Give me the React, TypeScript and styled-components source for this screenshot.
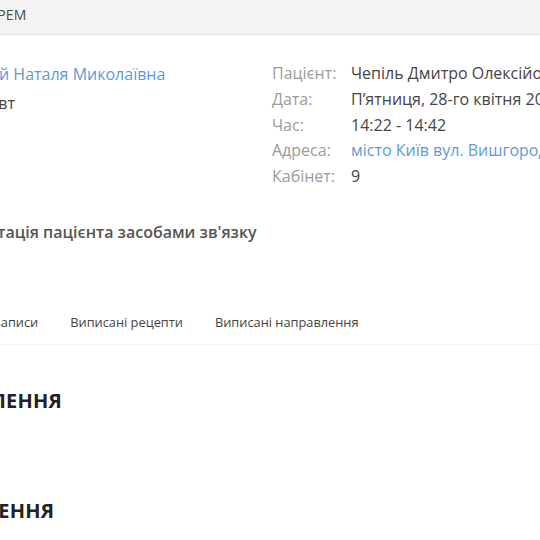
import React from "react";
import styled, { createGlobalStyle } from "styled-components";
import { Video } from "lucide-react";

const Global = createGlobalStyle`
  html, body { margin: 0; padding: 0; background: #fff; overflow: hidden; }
  body { font-family: "Open Sans", "Noto Sans", sans-serif; color: #444; }
`;

const Viewport = styled.div`
  width: 540px;
  height: 540px;
  overflow: hidden;
`;

const Header = styled.div`
  height: 35px;
  box-sizing: border-box;
  background: #f3f3f4;
  border-bottom: 1px solid #e3e3e5;
  display: flex;
  align-items: center;
  padding-bottom: 6px;
`;

const Page = styled.div`
  margin-left: -94px;
  width: 1100px;
`;

const HeaderTitle = styled.div`
  padding-left: 9px;
  font-size: 14px;
  color: #4a4a4a;
  letter-spacing: 0.2px;
  white-space: nowrap;
`;

const Info = styled.div`
  display: grid;
  grid-template-columns: 366px 1fr;
  padding-top: 26px;
`;

const LeftCol = styled.div`
  display: flex;
  flex-direction: column;
`;

const Doctor = styled.div`
  font-size: 16px;
  line-height: 26px;
  color: #5e9ad6;
  white-space: nowrap;
`;

const Specialty = styled.div`
  font-size: 16px;
  line-height: 26px;
  color: #444;
  margin-top: 3px;
  white-space: nowrap;
`;

const Details = styled.div`
  display: grid;
  grid-template-columns: 79px 1fr;
  font-size: 16px;
  line-height: 25.8px;
  white-space: nowrap;
`;

const Label = styled.div`
  color: #9b9b9b;
`;

const Value = styled.div<{ $link?: boolean }>`
  color: ${(p) => (p.$link ? "#5e9ad6" : "#454545")};
`;

const ServiceRow = styled.div`
  margin-top: 31px;
  display: flex;
  align-items: center;
  gap: 9px;
  color: #555;
`;

const ServiceType = styled.div`
  font-size: 16px;
  font-weight: 600;
  white-space: nowrap;
`;

const Tabs = styled.div`
  margin-top: 70px;
  padding-left: 16px;
  display: flex;
  border-bottom: 1px solid #f0f0f0;
  padding-bottom: 13px;
`;

const Tab = styled.div`
  font-size: 12.8px;
  color: #444;
  padding: 0 16px;
  white-space: nowrap;
`;

const SectionTitle = styled.h2<{ $top: number }>`
  margin: ${(p) => p.$top}px 0 0;
  font-size: 20px;
  font-weight: 700;
  color: #222;
  letter-spacing: 0.2px;
  white-space: nowrap;
`;

export default function App() {
  return (
    <Viewport>
      <Global />
      <Header>
        <Page>
          <HeaderTitle>ЗАПИСИ ОКРЕМ</HeaderTitle>
        </Page>
      </Header>
      <Page>
        <Info>
          <LeftCol>
            <Doctor>Сагайдачний Наталя Миколаївна</Doctor>
            <Specialty>Фізіотерапевт</Specialty>
          </LeftCol>
          <Details>
            <Label>Пацієнт:</Label>
            <Value>Чепіль Дмитро Олексійович</Value>
            <Label>Дата:</Label>
            <Value>П’ятниця, 28-го квітня 2023</Value>
            <Label>Час:</Label>
            <Value>14:22 - 14:42</Value>
            <Label>Адреса:</Label>
            <Value $link>місто Київ вул. Вишгородська 11</Value>
            <Label>Кабінет:</Label>
            <Value>9</Value>
          </Details>
        </Info>
        <ServiceRow>
          <Video size={16} strokeWidth={2} />
          <ServiceType>Консультація пацієнта засобами зв'язку</ServiceType>
        </ServiceRow>
        <Tabs>
          <Tab>Медичні записи</Tab>
          <Tab>Виписані рецепти</Tab>
          <Tab>Виписані направлення</Tab>
        </Tabs>
        <SectionTitle $top={42}>НАПРАВЛЕННЯ</SectionTitle>
        <SectionTitle $top={83}>ЗАКЛЮЧЕННЯ</SectionTitle>
      </Page>
    </Viewport>
  );
}
